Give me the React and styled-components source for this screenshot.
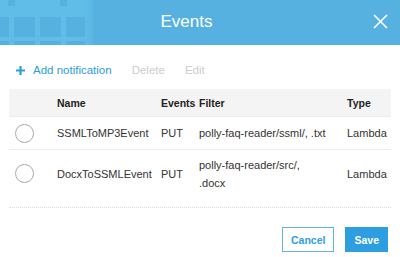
import React from "react"
import styled, { createGlobalStyle } from "styled-components"

const GlobalStyle = createGlobalStyle`
  html, body {
    margin: 0;
    padding: 0;
    background: #fff;
    font-family: "Liberation Sans", Arial, sans-serif;
  }
`

const Modal = styled.div`
  width: 400px;
  height: 257px;
  background: #fff;
  overflow: hidden;
`

const Header = styled.header`
  display: flex;
  align-items: center;
  height: 45px;
  background: #57b1e0;
  color: #fff;
`

const Title = styled.h2`
  flex: 1;
  margin: -2px 0 0;
  padding-right: 92px;
  text-align: center;
  font-size: 17px;
  font-weight: normal;
  line-height: 20px;
`

const Close = styled.button`
  width: 16px;
  height: 16px;
  margin: -2px 12px 0 0;
  padding: 0;
  border: 0;
  background: none;
  display: flex;
  align-items: center;
  justify-content: center;
  cursor: pointer;
`

const Actions = styled.div`
  display: flex;
  align-items: center;
  gap: 20px;
  margin: 18px 0 12px;
  padding-left: 16px;
  height: 14px;
  font-size: 11.5px;
`

const Action = styled.span`
  display: flex;
  align-items: center;
  gap: 8px;
  color: ${props => (props.disabled ? "#cdcdcd" : "#2b9edb")};
`

const Table = styled.div`
  margin: 0 9px;
  padding-bottom: 10px;
  border-bottom: 1px dotted #dcdcdc;
  color: #333;
`

const Row = styled.div`
  display: grid;
  grid-template-columns: 48px 104px 38px 148px 1fr;
  align-items: center;
  min-height: ${props => props.height}px;
  box-sizing: border-box;
  background: ${props => (props.head ? "#f4f4f4" : "#fff")};
  border-top: ${props => (props.head ? "0" : "1px solid #ececec")};
  font-size: ${props => (props.head ? "10.5px" : "11px")};
  font-weight: ${props => (props.head ? "bold" : "normal")};
  color: ${props => (props.head ? "#222" : "#333")};
`

const Cell = styled.div`
  line-height: 18px;
  padding-right: ${props => (props.wrap ? "19px" : "0")};
`

const Radio = styled.span`
  display: block;
  width: 17px;
  height: 17px;
  margin-left: 6px;
  border-radius: 50%;
  border: 1px solid #a9a9a9;
  background: #fff;
`

const Footer = styled.div`
  display: flex;
  justify-content: flex-end;
  gap: 11px;
  padding: 19px 12px 0 0;
`

const Button = styled.button`
  height: 25px;
  padding: 0 8px;
  min-width: ${props => (props.primary ? "40px" : "50px")};
  border: 1px solid ${props => (props.primary ? "#2d9ee0" : "#5db5e6")};
  background: ${props => (props.primary ? "#2d9ee0" : "#fff")};
  color: ${props => (props.primary ? "#fff" : "#2d9ee0")};
  font-family: "Liberation Sans", Arial, sans-serif;
  font-size: 10.5px;
  font-weight: bold;
  cursor: pointer;
`

// faded calendar picture behind the left end of the title bar
const Decoration = () => (
  <svg width="93" height="45" viewBox="0 0 93 45" style={{ display: "block" }}>
    <defs>
      <linearGradient id="fade" x1="0" x2="1" y1="0" y2="0">
        <stop offset="0.9" stopColor="#60bde8" />
        <stop offset="1" stopColor="#5bb6e4" />
      </linearGradient>
    </defs>
    <rect width="93" height="45" fill="url(#fade)" />
    <g fill="#56b0e0">
      <rect x="8" y="0" width="7" height="6" />
      <rect x="60" y="0" width="7" height="6" />
      <rect x="0" y="17" width="9" height="20" />
      <rect x="14" y="17" width="21" height="20" />
      <rect x="40" y="17" width="21" height="20" />
      <rect x="66" y="17" width="19" height="20" />
      <rect x="0" y="41" width="9" height="4" />
      <rect x="14" y="41" width="21" height="4" />
      <rect x="40" y="41" width="21" height="4" />
      <rect x="66" y="41" width="19" height="4" />
    </g>
  </svg>
)

const events = [
  { name: "SSMLToMP3Event", events: "PUT", filter: "polly-faq-reader/ssml/, .txt", type: "Lambda", height: 33 },
  { name: "DocxToSSMLEvent", events: "PUT", filter: "polly-faq-reader/src/, .docx", type: "Lambda", height: 48 },
]

const App = () => (
  <Modal>
    <GlobalStyle />
    <Header>
      <Decoration />
      <Title>Events</Title>
      <Close aria-label="Close">
        <svg width="15" height="15" viewBox="0 0 15 15">
          <path d="M1 1 L14 14 M14 1 L1 14" stroke="#fff" strokeWidth="1.6" />
        </svg>
      </Close>
    </Header>
    <Actions>
      <Action>
        <svg width="9" height="9" viewBox="0 0 9 9">
          <path d="M4.5 0 V9 M0 4.5 H9" stroke="#2b9edb" strokeWidth="2.2" />
        </svg>
        Add notification
      </Action>
      <Action disabled>Delete</Action>
      <Action disabled>Edit</Action>
    </Actions>
    <Table>
      <Row head height={27}>
        <Cell />
        <Cell>Name</Cell>
        <Cell>Events</Cell>
        <Cell>Filter</Cell>
        <Cell>Type</Cell>
      </Row>
      {events.map(ev => (
        <Row key={ev.name} height={ev.height}>
          <Cell>
            <Radio />
          </Cell>
          <Cell>{ev.name}</Cell>
          <Cell>{ev.events}</Cell>
          <Cell wrap>{ev.filter}</Cell>
          <Cell>{ev.type}</Cell>
        </Row>
      ))}
    </Table>
    <Footer>
      <Button>Cancel</Button>
      <Button primary>Save</Button>
    </Footer>
  </Modal>
)

export default App
